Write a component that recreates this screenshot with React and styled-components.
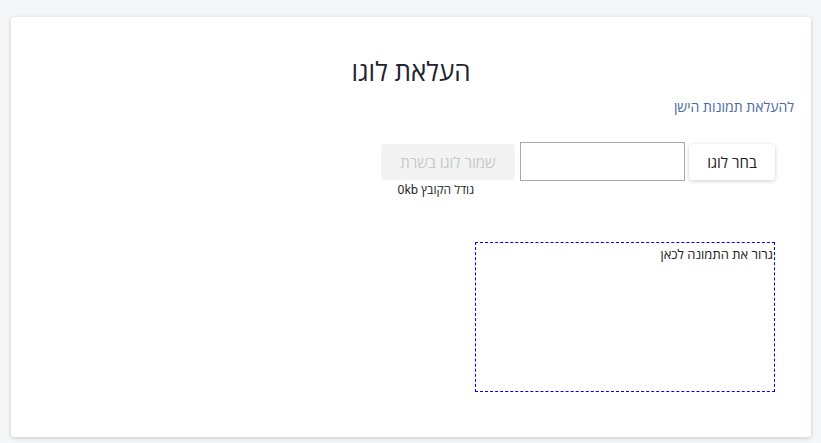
import styled, { createGlobalStyle } from 'styled-components'

const GlobalStyle = createGlobalStyle`
  html, body {
    margin: 0;
    padding: 0;
    background: #f5f6f8;
    font-family: "Noto Sans", "Open Sans", sans-serif;
  }
`

const Page = styled.div`
  box-sizing: border-box;
  padding: 17px 10px 6px 11px;
  direction: rtl;
`

const Card = styled.div`
  box-sizing: border-box;
  height: 420px;
  background: #ffffff;
  border-radius: 3px;
  box-shadow: 0 1px 4px rgba(0, 0, 0, 0.18);
  padding: 37px 17px 0 17px;
  display: flex;
  flex-direction: column;
`

const Title = styled.h1`
  margin: 0;
  text-align: center;
  font-size: 26px;
  font-weight: 400;
  color: #1f2430;
  line-height: 34px;
`

const OldLink = styled.a`
  margin-top: 9px;
  font-size: 14px;
  color: #4a6aa5;
  text-decoration: none;
  align-self: flex-start;
  line-height: 19px;
`

const Section = styled.div`
  padding-right: 19px;
  display: flex;
  flex-direction: column;
  align-items: flex-start;
`

const Row = styled.div`
  margin-top: 26px;
  display: flex;
  align-items: center;
  gap: 4px;
`

const Button = styled.button`
  box-sizing: border-box;
  width: ${(p) => p.$width}px;
  height: 36px;
  border: none;
  border-radius: 4px;
  background: ${(p) => (p.disabled ? '#f3f3f3' : '#ffffff')};
  box-shadow: ${(p) => (p.disabled ? 'none' : '0 1px 4px rgba(0, 0, 0, 0.2)')};
  font-family: inherit;
  font-size: 15px;
  color: ${(p) => (p.disabled ? '#c8c8c8' : '#222')};
`

const FileInput = styled.div`
  box-sizing: border-box;
  width: 165px;
  height: 39px;
  border: 1px solid #a8a8a8;
  background: #fff;
`

const SaveColumn = styled.div`
  display: flex;
  flex-direction: column;
  align-items: flex-start;
  position: relative;
  padding-right: 1px;
`

const SizeNote = styled.div`
  position: absolute;
  top: 37px;
  right: 42px;
  white-space: nowrap;
  font-size: 12px;
  color: #222;
`

const DropZone = styled.div`
  box-sizing: border-box;
  margin-top: 61px;
  width: 300px;
  height: 150px;
  border: 1px dashed #0000ff;
  font-size: 13px;
  color: #222;
  line-height: 18px;
  padding: 2px 1px 0 0;
`

export default function App() {
  return (
    <>
      <GlobalStyle />
      <Page>
        <Card>
          <Title>העלאת לוגו</Title>
          <OldLink href="#">להעלאת תמונות הישן</OldLink>
          <Section>
            <Row>
              <Button $width={86}>בחר לוגו</Button>
              <FileInput />
              <SaveColumn>
                <Button $width={134} disabled>שמור לוגו בשרת</Button>
                <SizeNote>גודל הקובץ 0kb</SizeNote>
              </SaveColumn>
            </Row>
            <DropZone>גרור את התמונה לכאן</DropZone>
          </Section>
        </Card>
      </Page>
    </>
  )
}
